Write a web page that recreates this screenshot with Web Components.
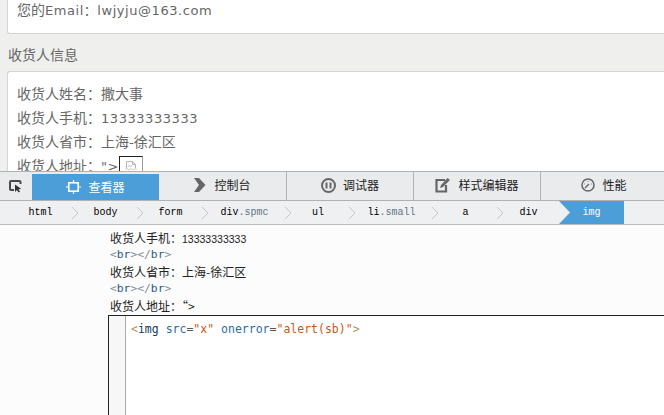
<!DOCTYPE html>
<html>
<head>
<meta charset="utf-8">
<style>
html, body { margin: 0; height: 100%; overflow: hidden; background: #fff; }
body { display: flex; flex-direction: column; width: 664px; height: 415px; }
</style>
</head>
<body>
<order-page>
  <div slot="first">您的<latin-text>Email：lwjyju@163.com</latin-text></div>
  <span slot="title">收货人信息</span>
  <div slot="second">收货人姓名：撒大事</div>
  <div slot="second">收货人手机：<latin-text>13333333333</latin-text></div>
  <div slot="second">收货人省市：上海-徐汇区</div>
  <div slot="second">收货人地址：<latin-text>"&gt;</latin-text><broken-img></broken-img></div>
</order-page>
<dev-toolbar></dev-toolbar>
<dev-crumbs></dev-crumbs>
<dev-markup></dev-markup>
<script>
const CJK = '"Noto Sans CJK SC", sans-serif';

class latinText extends HTMLElement {
    constructor() {
        super();
        this.attachShadow({ mode: "open" }).innerHTML = `<style>:host { font-family: "DejaVu Sans", ${CJK}; font-size: 13px; letter-spacing: .55px; }</style><slot></slot>`;
    }
}
customElements.define("latin-text", latinText);

class brokenImg extends HTMLElement {
    constructor() {
        super();
        this.attachShadow({ mode: "open" }).innerHTML = `
            <style>
            :host { display: inline-flex; box-sizing: border-box; width: 24px; height: 24px; border: 1px solid #222; border-right-color: #999;
                    vertical-align: -4px; justify-content: center; padding-top: 3px; }
            </style>
            <svg width="14" height="15" viewBox="0 0 14 15" fill="none" stroke="#b5b5b5">
                <path d="M2.5 8V1.5h6l3 3V8M8.5 1.5v3h3"/>
                <path d="M2.5 11v2.5h9V11" />
                <path d="M1 9.500l2-1 2 1.500 2-1.500 2 1.500 2-1.500 2 1" stroke="#ccc"/>
                <rect x="4" y="5" width="4" height="2" fill="#ddd" stroke="none"/>
            </svg>`;
    }
}
customElements.define("broken-img", brokenImg);

class orderPage extends HTMLElement {
    constructor() {
        super();
        this.attachShadow({ mode: "open" }).innerHTML = `
            <style>
            :host { display: block; height: 171px; flex: none; overflow: hidden; background: #efefee; color: #666;
                    font: 14px/24px ${CJK}; padding-left: 7px; box-sizing: border-box; }
            .card { background: #fff; border: 1px solid #d5d5d5; border-right: 0; border-radius: 3px 0 0 3px; padding-left: 9px; }
            .first { border-top: 0; height: 34px; box-sizing: border-box; line-height: 18px; border-radius: 0 0 0 3px; }
            .title { height: 37px; line-height: 40px; margin-left: 1px; color: #666; }
            .second { padding-top: 10px; line-height: 23.600px; height: 120px; box-sizing: border-box; }
            </style>
            <div class="card first"><slot name="first"></slot></div>
            <div class="title"><slot name="title"></slot></div>
            <div class="card second"><slot name="second"></slot></div>`;
    }
}
customElements.define("order-page", orderPage);

class devToolbar extends HTMLElement {
    constructor() {
        super();
        this.attachShadow({ mode: "open" }).innerHTML = `
            <style>
            :host { display: flex; flex: none; box-sizing: border-box; height: 30px; background: #e9ebed; border-top: 1px solid #b0b2b4; border-bottom: 1px solid #b0b2b4;
                    font: 12px/14px ${CJK}; color: #222; }
            .pick { width: 32px; display: flex; align-items: center; justify-content: center; flex: none; }
            .tab { display: flex; align-items: center; justify-content: center; gap: 7px; box-sizing: border-box; width: 127px; height: 28px; padding-bottom: 2px; border-right: 1px solid #b0b2b4; flex: none; }
            .on { height: 26px; margin-top: 2px; background: #4c9ed9; color: #fff; border-right: 0; padding-bottom: 0; }
            .wide { width: 128px; gap: 8px; }
            .last { flex: 1; border-right: 0; padding-left: 3px; }
            </style>
            <div class="pick">
                <svg width="14" height="14" viewBox="0 0 14 14" fill="none">
                    <path d="M5 11H2a1 1 0 0 1-1-1V3a1 1 0 0 1 1-1h8.500a1 1 0 0 1 1 1v2" stroke="#4a4a4a" stroke-width="2"/>
                    <path d="M6 5.500v7.500l2-2 1.500 2.500 1.500-1-1.500-2.300 2.800-.2z" fill="#333"/>
                </svg>
            </div>
            <div class="tab on">
                <svg width="15" height="14" viewBox="0 0 15 14" fill="none" stroke="#fff">
                    <rect x="2.800" y="2.800" width="9.400" height="8.400" stroke-width="1.600"/>
                    <path d="M0 7h2M13 7h2M7.500 0v2M7.500 12v2" stroke-width="1.200"/>
                </svg>
                <span>查看器</span>
            </div>
            <div class="tab wide">
                <svg width="12" height="14" viewBox="0 0 12 14"><path d="M0 0h5l6.500 7L5 14H0l5-7z" fill="#666"/></svg>
                <span>控制台</span>
            </div>
            <div class="tab">
                <svg width="15" height="15" viewBox="0 0 15 15" fill="none"><circle cx="7.500" cy="7.500" r="6.500" stroke="#666" stroke-width="2"/><path d="M5.500 4.500v6M9.500 4.500v6" stroke="#666" stroke-width="2"/></svg>
                <span>调试器</span>
            </div>
            <div class="tab" style="gap:8px">
                <svg width="15" height="16" viewBox="0 0 15 16" fill="none"><path d="M10 3H1.500v11.500H11V8" stroke="#666" stroke-width="2.200"/><path d="M5 11l1-3 6.500-7L15 3l-7 7z" fill="#666"/></svg>
                <span>样式编辑器</span>
            </div>
            <div class="tab last">
                <svg width="14" height="14" viewBox="0 0 14 14" fill="none"><circle cx="7" cy="7" r="6" stroke="#666" stroke-width="1.500"/><path d="M4 10l4-4" stroke="#666" stroke-width="1.500"/><path d="M3 6h1M7 3v1M11 6h-1" stroke="#888"/></svg>
                <span>性能</span>
            </div>`;
    }
}
customElements.define("dev-toolbar", devToolbar);

class devCrumbs extends HTMLElement {
    constructor() {
        super();
        const items = [["html", "", 65], ["body", "", 65], ["form", "", 65], ["div", ".spmc", 83], ["ul", "", 64], ["li", ".small", 83], ["a", "", 65], ["div", "", 61]];
        this.attachShadow({ mode: "open" }).innerHTML = `
            <style>
            :host { display: flex; flex: none; box-sizing: border-box; height: 24px; padding-left: 8px; background: #eff0f2; border-bottom: 1px solid #b8babc;
                    font: 10px "Liberation Mono", monospace; color: #000; }
            .item { position: relative; display: flex; align-items: center; justify-content: center; box-sizing: border-box; padding-bottom: 1px; }
            .item svg { position: absolute; right: -6px; top: 5px; }
            .item i { font-style: normal; color: #5f7387; }
            .sel { width: 65px; background: #4c9ed9; color: #fff; clip-path: polygon(0 0, 100% 0, 100% 100%, 0 100%, 11px 50%); }
            </style>
            ${items.map(([tag, cls, w], i) => `<div class="item" style="width:${w}px">${tag}${cls ? `<i>${cls}</i>` : ""}${i < 7 ? `<svg width="8" height="14" viewBox="0 0 8 14" fill="none"><path d="M1 1l6 6-6 6" stroke="#c4c6c8"/></svg>` : ""}</div>`).join("")}
            <div class="item sel">img</div>`;
    }
}
customElements.define("dev-crumbs", devCrumbs);

class devMarkup extends HTMLElement {
    constructor() {
        super();
        const br = `<div class="row tag">&lt;<b>br</b>&gt;&lt;/<b>br</b>&gt;</div>`;
        this.attachShadow({ mode: "open" }).innerHTML = `
            <style>
            :host { display: block; flex: 1; min-height: 0; overflow: hidden; background: #fcfcfc; padding-left: 108px; font: 12px ${CJK}; color: #222; }
            .rows { margin-top: -13px; padding-left: 2px; }
            .row { height: 17px; line-height: 17px; white-space: nowrap; }
            .tag { font: 11.300px/17px "DejaVu Sans Mono", monospace; color: #7a8a99; }
            .tag b { font-weight: normal; color: #2a5a86; }
            .box { box-sizing: border-box; margin-top: 1px; height: 120px; background: #fff; border: 1px solid #222; border-right: 0; display: flex; }
            .gutter { width: 16px; flex: none; background: #f7f7f7; border-right: 1px solid #aaa; }
            code { padding: 5px 0 0 5px; font: 11.500px/17px "DejaVu Sans Mono", monospace; color: #2a6ea8; }
            code em { font-style: normal; color: #c85a10; }
            code i { font-style: normal; color: #b5935e; }
            code b { font-weight: normal; color: #16385c; }
            code u { text-decoration: none; color: #555; }
            </style>
            <div class="rows">
                ${br}
                <div class="row">收货人手机：<span style="font:10.500px 'Liberation Sans'">13333333333</span></div>
                ${br}
                <div class="row">收货人省市：上海-徐汇区</div>
                ${br}
                <div class="row">收货人地址：“&gt;</div>
            </div>
            <div class="box">
                <div class="gutter"></div>
                <code><i>&lt;</i><b>img</b> src<u>=</u><em>"x"</em> onerror<u>=</u><em>"alert(sb)"</em><i>&gt;</i></code>
            </div>`;
    }
}
customElements.define("dev-markup", devMarkup);
</script>
</body>
</html>
